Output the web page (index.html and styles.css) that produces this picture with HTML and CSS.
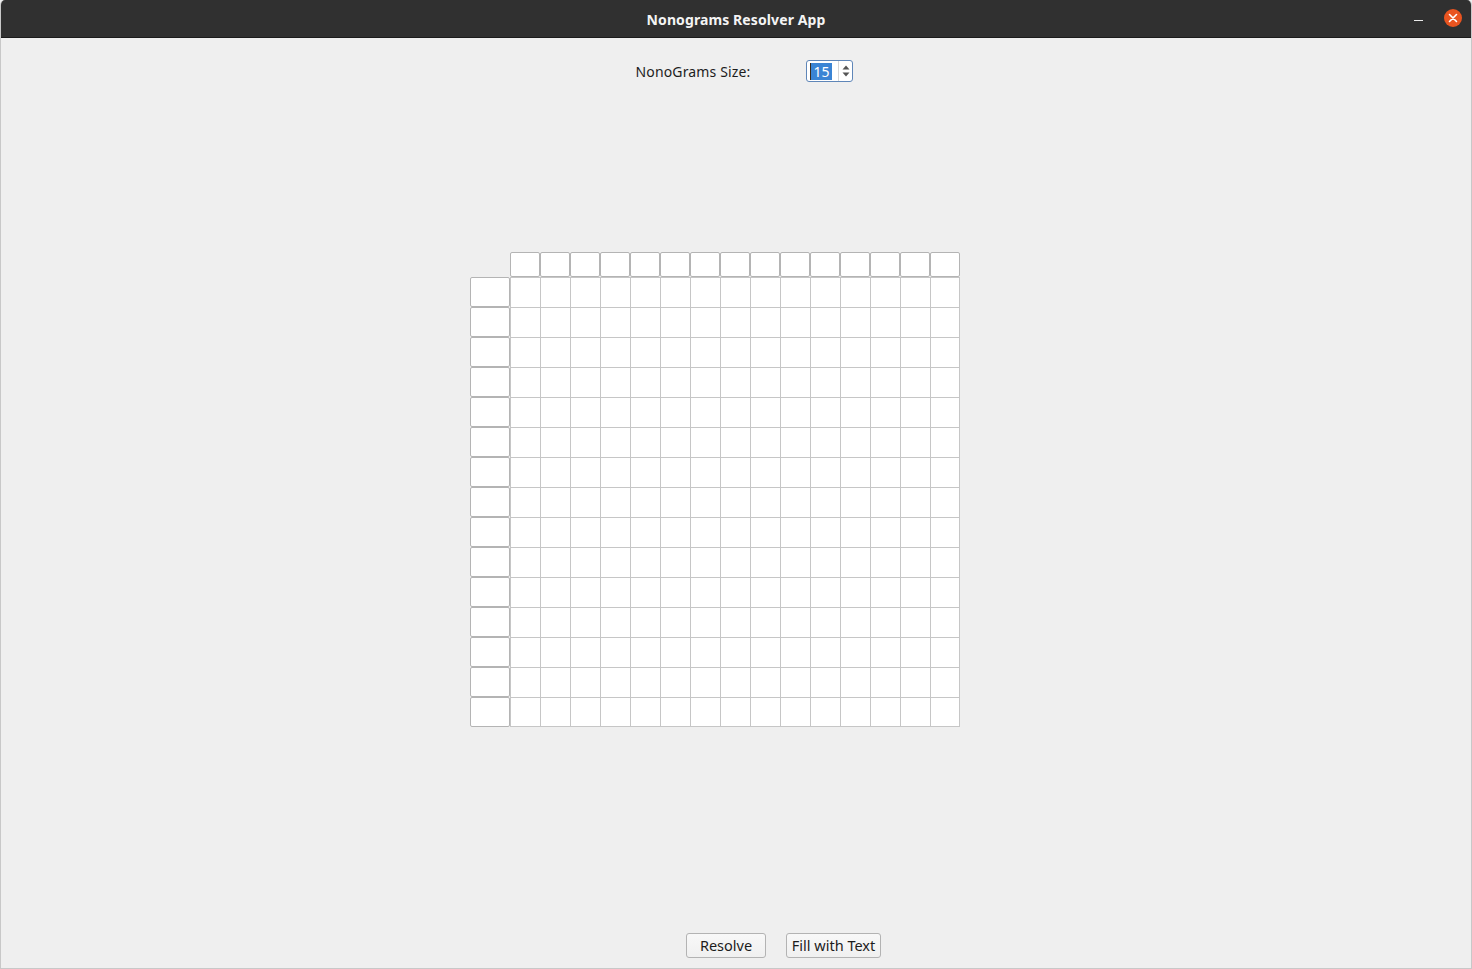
FILE: index.html
```html
<!DOCTYPE html>
<html>
<head>
<meta charset="utf-8">
<title>Nonograms Resolver App</title>
<link rel="stylesheet" href="styles.css">
</head>
<body>
<div class="window">
  <header class="titlebar">
    <span class="title">Nonograms Resolver App</span>
    <div class="controls">
      <span class="minimize"></span>
      <span class="close">
        <svg width="18" height="18" viewBox="0 0 18 18"><path d="M5.5 5.5 L12.5 12.5 M12.5 5.5 L5.5 12.5" stroke="#fff" stroke-width="1.6" stroke-linecap="round"/></svg>
      </span>
    </div>
  </header>
  <main class="content">
    <div class="size-row">
      <label class="size-label">NonoGrams Size:</label>
      <div class="spinbox">
        <span class="spin-value"><span class="caret"></span><span class="selected">15</span></span>
        <span class="spin-arrows">
          <svg width="10" height="16" viewBox="0 0 10 16"><path d="M1.5 6.5 L5 2.5 L8.5 6.5 Z" fill="#555"/><path d="M1.5 9.5 L5 13.5 L8.5 9.5 Z" fill="#555"/></svg>
        </span>
      </div>
    </div>
    <div class="board-area">
      <div class="board">
        <div class="corner"></div>
        <div class="col-heads">
          <div class="col-head"></div><div class="col-head"></div><div class="col-head"></div>
          <div class="col-head"></div><div class="col-head"></div><div class="col-head"></div>
          <div class="col-head"></div><div class="col-head"></div><div class="col-head"></div>
          <div class="col-head"></div><div class="col-head"></div><div class="col-head"></div>
          <div class="col-head"></div><div class="col-head"></div><div class="col-head"></div>
        </div>
        <div class="row-heads">
          <div class="row-head"></div><div class="row-head"></div><div class="row-head"></div>
          <div class="row-head"></div><div class="row-head"></div><div class="row-head"></div>
          <div class="row-head"></div><div class="row-head"></div><div class="row-head"></div>
          <div class="row-head"></div><div class="row-head"></div><div class="row-head"></div>
          <div class="row-head"></div><div class="row-head"></div><div class="row-head"></div>
        </div>
        <div class="cells"></div>
      </div>
    </div>
    <div class="button-row">
      <button class="btn btn-resolve">Resolve</button>
      <button class="btn btn-fill">Fill with Text</button>
    </div>
  </main>
</div>
</body>
</html>
```
FILE: styles.css
```css
html, body {
  margin: 0;
  padding: 0;
  background: #efefef;
}
body {
  font-family: "Noto Sans", "DejaVu Sans", sans-serif;
  color: #1c1c1c;
}
.window {
  width: 1472px;
  height: 969px;
  box-sizing: border-box;
  display: flex;
  flex-direction: column;
  background: #efefef;
  border-left: 1px solid #c8c8c8;
  border-right: 1px solid #c8c8c8;
  border-bottom: 1px solid #c8c8c8;
  border-radius: 5px 5px 0 0;
  overflow: hidden;
}
.titlebar {
  height: 38px;
  flex: none;
  box-sizing: border-box;
  padding-top: 2px;
  background: #303030;
  border-bottom: 1px solid #1b1b1b;
  display: flex;
  align-items: center;
  justify-content: center;
  position: relative;
}
.title {
  color: #f4f4f4;
  font-size: 14px;
  font-weight: bold;
  letter-spacing: 0.1px;
}
.controls {
  position: absolute;
  right: 9px;
  top: 9px;
  display: flex;
  align-items: center;
  gap: 21px;
}
.minimize {
  width: 9px;
  height: 1px;
  background: #eaeaea;
  margin-top: 5px;
}
.close {
  width: 18px;
  height: 18px;
  border-radius: 50%;
  background: #e95420;
  display: flex;
}
.content {
  flex: 1;
  display: flex;
  flex-direction: column;
}
.size-row {
  display: flex;
  justify-content: center;
  align-items: center;
  padding-top: 22px;
  padding-left: 17px;
  gap: 56px;
}
.size-label {
  font-size: 14px;
  letter-spacing: 0.14px;
  color: #1d1d1d;
}
.spinbox {
  width: 47px;
  height: 22px;
  box-sizing: border-box;
  border: 1px solid #5f86b8;
  border-radius: 3px;
  background: #fff;
  display: flex;
}
.spin-value {
  flex: 1;
  display: flex;
  align-items: center;
  padding-left: 3px;
}
.caret {
  width: 1px;
  height: 17px;
  background: #3a2a1a;
}
.selected {
  background: #3a84d4;
  color: #fff;
  font-size: 14px;
  line-height: 17px;
  height: 17px;
  padding: 0 3px 0 2px;
}
.spin-arrows {
  width: 13px;
  border-left: 1px solid #d6d6d6;
  display: flex;
  align-items: center;
  justify-content: center;
}
.board-area {
  display: flex;
  justify-content: center;
  padding-right: 42px;
  margin-top: 170px;
}
.board {
  display: grid;
  grid-template-columns: 40px 450px;
  grid-template-rows: 25px 450px;
}
.col-heads {
  display: flex;
}
.col-head {
  width: 30px;
  height: 25px;
  box-sizing: border-box;
  background: #fff;
  border: 1px solid #b4b4b4;
  border-radius: 2px;
}
.row-heads {
  display: flex;
  flex-direction: column;
}
.row-head {
  width: 40px;
  height: 30px;
  box-sizing: border-box;
  background: #fff;
  border: 1px solid #b4b4b4;
  border-radius: 2px;
}
.cells {
  width: 450px;
  height: 450px;
  box-sizing: border-box;
  background-color: #fff;
  background-image:
    linear-gradient(to right, #c6c6c6 1px, transparent 1px),
    linear-gradient(to bottom, #c6c6c6 1px, transparent 1px);
  background-size: 30px 30px;
  border-right: 1px solid #c6c6c6;
  border-bottom: 1px solid #c6c6c6;
}
.button-row {
  margin-top: auto;
  display: flex;
  justify-content: center;
  gap: 20px;
  padding-left: 95px;
  padding-bottom: 10px;
}
.btn {
  height: 25px;
  box-sizing: border-box;
  border: 1px solid #b3b3b3;
  border-radius: 3px;
  background: linear-gradient(#f8f8f8, #f0f0f0);
  font-family: "Noto Sans", "DejaVu Sans", sans-serif;
  font-size: 14.5px;
  color: #1c1c1c;
  padding: 0 0 2px 0;
}
.btn-resolve {
  width: 80px;
}
.btn-fill {
  width: 95px;
}
```
